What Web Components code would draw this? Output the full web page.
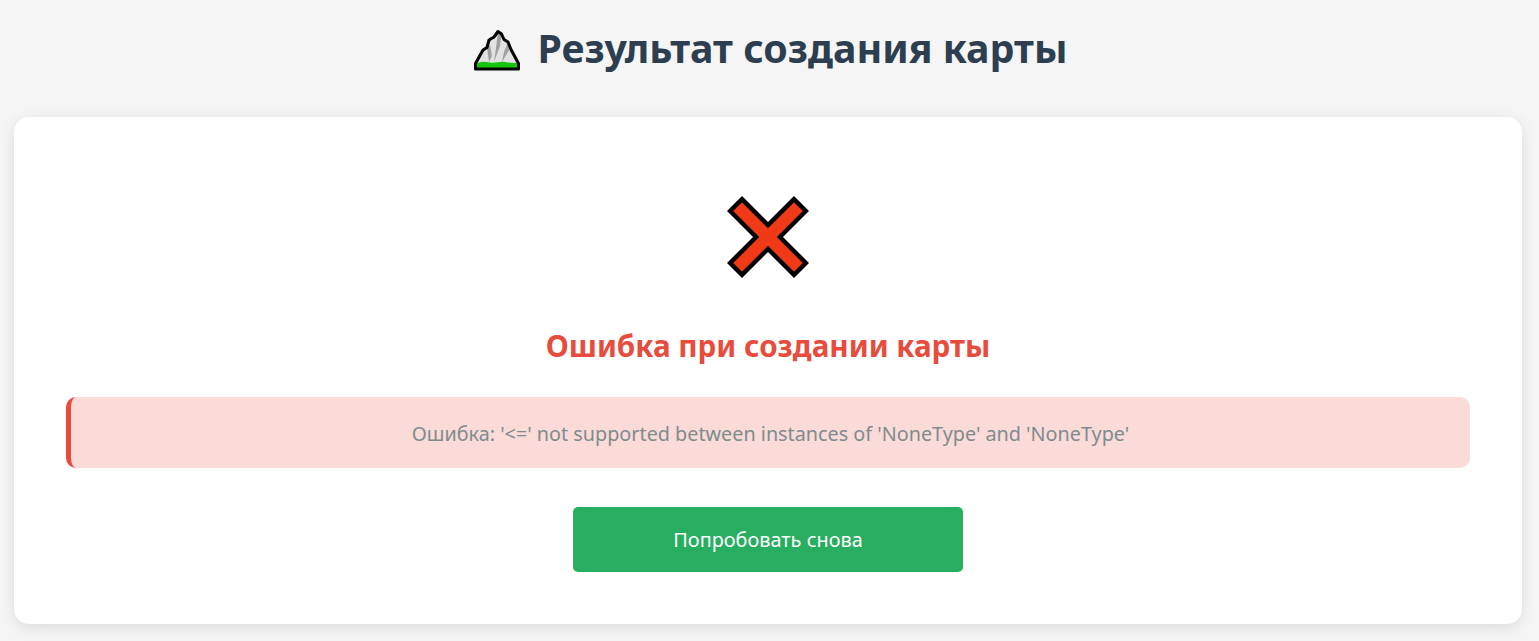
<!DOCTYPE html>
<html lang="ru"><head><meta charset="utf-8"><title>Результат создания карты</title>
<style>
html,body{margin:0;padding:0;background:#f5f5f5;height:641px;overflow:hidden}
body{font-family:"Noto Sans","Open Sans",sans-serif}
</style></head><body>
<template id="t-page"><style>
:host{display:flex;flex-direction:column;height:641px;box-sizing:border-box;padding:0 17px 17px 14px}
</style><slot></slot></template>

<template id="t-title"><style>
:host{display:flex;justify-content:center;align-items:center;gap:17px;height:97px;padding-left:4px;color:#2c3e50;font-size:39.300px;font-weight:700;line-height:1;box-sizing:border-box}
svg{display:block;width:48px;height:48px;flex:none;margin-top:3px}
h1{margin:0;font:inherit;white-space:nowrap}
</style>
<svg viewBox="0 0 48 48" aria-hidden="true">
<path d="M2.500 43V37.500L10 24L14 21.500L16 14L21 11L25 5.500L28.500 8L31 13.500L35 16L38 23.500L45.500 37.500V43Z" fill="#e2e2e2"/>
<path d="M14 21.500L17 19L19 30L16 36ZM25 5.500L28.500 8L27 20L21 36L23 22ZM35 16L36 24L29 36L31 26Z" fill="#a0a0a0"/>
<path d="M3 42V37.500C8 35.500 12 35.500 17 36.500C22 37.500 27 35 32 36C37 37 41 36.500 45 37.500V42Z" fill="#16c60c"/>
<path d="M2.500 43V37.500L10 24L14 21.500L16 14L21 11L25 5.500L28.500 8L31 13.500L35 16L38 23.500L45.500 37.500V43Z" fill="none" stroke="#000" stroke-width="3" stroke-linejoin="round"/>
</svg><h1><slot></slot></h1></template>

<template id="t-card"><style>
:host{display:flex;flex-direction:column;align-items:stretch;box-sizing:border-box;flex:1;margin-top:20px;background:#fff;border-radius:15px;box-shadow:0 4px 15px rgba(0,0,0,.1);padding:79px 52px 52px}
</style><slot></slot></template>

<template id="t-icon"><style>
:host{display:flex;justify-content:center;height:82px}
svg{display:block;width:82px;height:82px}
</style>
<svg viewBox="0 0 82 82" aria-hidden="true">
<path d="M15 3.100L41 29.100L67 3.100L78.900 15L52.900 41L78.900 67L67 78.900L41 52.900L15 78.900L3.100 67L29.100 41L3.100 15Z" fill="#f03a17" stroke="#000" stroke-width="4.400" stroke-linejoin="miter"/>
</svg></template>

<template id="t-heading"><style>
:host{display:block;margin-top:49px;text-align:center;color:#e74c3c;font-size:29.600px;font-weight:700;line-height:38px}
</style><slot></slot></template>

<template id="t-alert"><style>
:host{display:block;box-sizing:border-box;margin-top:32px;height:71px;background:#fadbd8;border-left:5px solid #e74c3c;border-radius:10px;color:#7f8c8d;font-size:19.800px;line-height:73px;text-align:center;white-space:nowrap}
</style><slot></slot></template>

<template id="t-button"><style>
:host{display:flex;justify-content:center;margin-top:39px}
button{width:390px;height:65px;border:0;border-radius:5px;background:#27ae60;color:#fff;font:inherit;font-size:19.900px;padding:0;cursor:pointer}
</style><button type="button"><slot></slot></button></template>

<map-page>
  <map-title>Результат создания карты</map-title>
  <map-card>
    <map-icon></map-icon>
    <map-heading>Ошибка при создании карты</map-heading>
    <map-alert>Ошибка: '&lt;=' not supported between instances of 'NoneType' and 'NoneType'</map-alert>
    <map-button>Попробовать снова</map-button>
  </map-card>
</map-page>

<script>
for (const [tag,id] of [['map-page','t-page'],['map-title','t-title'],['map-card','t-card'],['map-icon','t-icon'],['map-heading','t-heading'],['map-alert','t-alert'],['map-button','t-button']]) {
  customElements.define(tag, class extends HTMLElement {
    constructor(){super();this.attachShadow({mode:'open'}).appendChild(document.getElementById(id).content.cloneNode(true));}
  });
}
</script>
</body></html>
